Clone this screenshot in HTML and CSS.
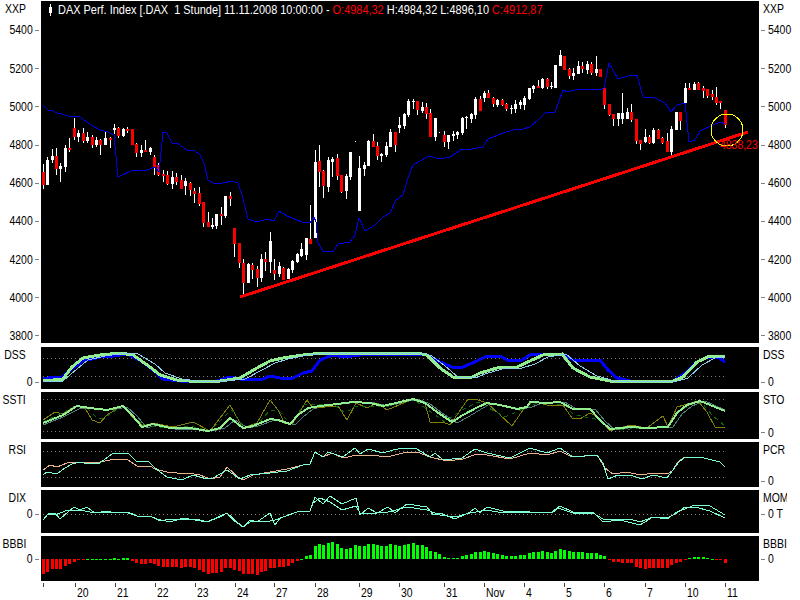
FILE: index.html
```html
<!DOCTYPE html>
<html lang="de">
<head>
<meta charset="utf-8">
<title>DAX Perf. Index</title>
<link rel="stylesheet" href="styles.css">
</head>
<body>
<div class="page">

  <section class="row row-main">
    <div class="gutter gutter-left">
      <div class="scale-name"><span class="t">XXP</span></div>
      <div class="tick"><span class="t">5400</span></div><div class="tick"><span class="t">5200</span></div><div class="tick"><span class="t">5000</span></div>
      <div class="tick"><span class="t">4800</span></div><div class="tick"><span class="t">4600</span></div><div class="tick"><span class="t">4400</span></div>
      <div class="tick"><span class="t">4200</span></div><div class="tick"><span class="t">4000</span></div><div class="tick"><span class="t">3800</span></div>
    </div>
    <div class="plot">
      <div class="legend">
        <svg class="legend-icon" viewBox="0 0 6 12"><path class="wick" d="M3 0V12"/><path class="body-w" d="M3 3V9" /></svg>
        <span class="legend-text">DAX Perf. Index [.DAX  1 Stunde] 11.11.2008 10:00:00 - <span class="down">O:4984,32</span> H:4984,32 L:4896,10 <span class="down">C:4912,87</span></span>
      </div>
      <svg class="chart" viewBox="41 1 718 342" width="718" height="342">
        <path class="wick" d="M43.5 164V189M47.5 157V185M52.5 149V163M56.5 148V175M60.5 163V182M65.5 145V172M69.5 138V152M74.5 118V140M78.5 130V142M83.5 128V143M87.5 132V143M92.5 135V148M96.5 137V147M100.5 139V155M105.5 132V145M110.5 137V148M114.5 124V134M118.5 127V138M123.5 128V137M127.5 127V133M136.5 143V157M141.5 145V157M145.5 140V152M150.5 147V155M154.5 155V175M158.5 163V176M163.5 170V182M167.5 171V185M172.5 171V189M176.5 173V185M181.5 175V189M185.5 178V195M190.5 182V196M194.5 188V203M199.5 187V206M203.5 202V227M208.5 212V227M212.5 218V229M216.5 214V229M221.5 207V225M225.5 196V218M230.5 192V206M234.5 228V257M239.5 243V268M243.5 259V295M248.5 263V283M252.5 263V279M257.5 266V287M261.5 254V282M265.5 252V271M270.5 232V273M274.5 259V280M279.5 262V277M283.5 267V280M288.5 268V279M292.5 260V273M297.5 253V263M301.5 243V257M306.5 238V260M310.5 205V244M315.5 150V238M319.5 145V187M323.5 170V198M328.5 157V192M332.5 157V177M337.5 154V180M341.5 175V193M346.5 174V199M350.5 152V180M355 141h1M359.5 156V211M364.5 162V176M368.5 140V166M373.5 134V147M377.5 142V160M381.5 153V162M386.5 142V157M390.5 129V147M395.5 132V152M399.5 117V133M404.5 113V129M408.5 99V117M413.5 99V109M417.5 101V115M422.5 102V113M426.5 103V119M430.5 109V137M435.5 118V141M439 132h1M444.5 131V147M448.5 135V149M453.5 131V141M457.5 131V139M462.5 117V135M466.5 116V129M471.5 113V123M475.5 97V119M480.5 96V111M484.5 91V102M488.5 90V98M493.5 97V107M497.5 99V107M502.5 99V106M506.5 103V111M511.5 105V114M515.5 100V113M520.5 100V109M524.5 96V110M529.5 88V100M533.5 85V93M538.5 80V88M542.5 78V89M547.5 78V89M551.5 82V89M560.5 50V66M569.5 68V79M573.5 68V80M578.5 61V74M582.5 62V73M587.5 61V74M591.5 62V75M596.5 56V76M604.5 87V109M609.5 104V116M613.5 114V126M618.5 113V126M622.5 93V124M627.5 108V119M631.5 104V122M636.5 119V144M640.5 140V150M645.5 129V143M649.5 135V144M653.5 128V144M658.5 129V139M662.5 137V144M667.5 133V152M671.5 126V155M680.5 112V130M685.5 83V103M689.5 83V90M694.5 82V90M698.5 82V90M703.5 86V98M707.5 89V98M712.5 90V100M716.5 87V105M720.5 101V109M725.5 110V128"/>
        <path class="body-w" d="M47.5 160V185M52.5 156V160M60.5 166V169M65.5 148V167M78.5 133V137M87.5 137V141M96.5 140V145M105.5 138V145M114.5 128V130M123.5 129V136M141.5 150V153M150.5 148V152M172.5 177V184M185.5 181V186M212.5 225V227M216.5 214V226M225.5 196V216M248.5 264V283M261.5 259V278M270.5 241V262M279.5 266V274M288.5 269V279M292.5 261V270M297.5 254V262M301.5 249V256M306.5 238V255M315.5 162V238M328.5 160V187M332.5 159V162M346.5 176V191M350.5 152V177M359.5 168V211M364.5 165V169M368.5 141V166M381.5 154V156M386.5 146V155M390.5 132V147M399.5 125V128M404.5 114V126M408.5 101V115M413.5 101V102M422.5 107V111M435.5 118V137M448.5 135V142M453.5 134V136M457.5 132V135M462.5 118V133M466.5 117V118M471.5 114V119M475.5 99V115M484.5 93V98M497.5 100V105M511.5 108V109M515.5 104V109M520.5 102V105M524.5 98V105M529.5 88V99M533.5 86V89M542.5 79V88M551.5 86V87M555.5 65V88M560.5 55V66M573.5 73V76M578.5 66V74M587.5 64V70M596.5 69V73M618.5 113V119M622.5 113V119M627.5 112V119M645.5 137V142M653.5 130V143M671.5 129V152M676.5 112V130M685.5 88V103M694.5 84V90"/>
        <path class="body-r" d="M43.5 172V185M56.5 156V169M69.5 148V150M74.5 128V137M83.5 133V141M92.5 137V145M100.5 140V145M110.5 138V140M118.5 128V136M127.5 129V131M132.5 129V145M136.5 144V153M145.5 150V152M154.5 157V167M158.5 165V175M163.5 174V176M167.5 175V184M176.5 177V182M181.5 180V189M190.5 183V190M194.5 191V194M199.5 193V204M203.5 202V223M208.5 222V227M221.5 214V216M230.5 196V199M234.5 228V244M239.5 243V263M243.5 263V283M252.5 265V270M257.5 269V278M265.5 259V262M274.5 270V274M283.5 268V280M310.5 239V244M319.5 161V172M323.5 171V186M337.5 158V176M341.5 175V192M373.5 141V147M377.5 146V156M395.5 132V145M417.5 101V110M426.5 107V114M430.5 113V137M444.5 135V142M480.5 99V111M488.5 93V98M493.5 98V104M502.5 100V105M506.5 104V109M538.5 86V88M547.5 79V87M564.5 56V70M569.5 69V76M582.5 66V69M591.5 64V73M600.5 69V77M604.5 88V105M609.5 104V115M613.5 114V119M631.5 112V120M636.5 119V141M640.5 140V144M649.5 137V143M658.5 130V139M662.5 138V143M667.5 141V152M680.5 112V121M689.5 88V90M698.5 83V90M703.5 88V91M707.5 89V96M712.5 94V97M716.5 97V103M720.5 101V103M725.5 110V125"/>
        <polyline class="line-blue" points="43,105 48,110 53,111 57,113 62,114 68,116 74,117 78,116 83,119 91,125 100,130 108,132 114,135 118,177 133,170 147,170 155,167 159,172 163,132 167,133 172,143 177,143 187,150 195,151 200,155 204,163 208,180 215,184 223,183 232,181 238,183 242,195 248,219 257,222 267,219 274,221 279,211 287,216 302,222 310,223 314,217 316,222 318,243 323,251 333,252 338,244 350,242 355,235 359,218 365,231 375,225 383,217 390,213 396,200 403,195 408,178 413,165 420,161 429,156 440,159 450,157 462,149 472,149 483,147 488,139 503,133 513,130 523,129 530,127 538,120 545,113 555,112 563,90 568,92 578,89 602,89 604,88 609,63 613,70 618,79 628,76 637,75 643,97 655,98 665,103 671,112 677,105 685,103 689,142 695,140 700,131 713,125 720,122 725,124"/>
        <line class="trend" x1="240" y1="297" x2="748" y2="132"/>
        <circle class="marker" cx="727" cy="130" r="16"/>
        <text class="value-tag" x="720" y="149">4838,23</text>
      </svg>
    </div>
    <div class="gutter gutter-right">
      <div class="scale-name"><span class="t">XXP</span></div>
      <div class="tick"><span class="t">5400</span></div><div class="tick"><span class="t">5200</span></div><div class="tick"><span class="t">5000</span></div>
      <div class="tick"><span class="t">4800</span></div><div class="tick"><span class="t">4600</span></div><div class="tick"><span class="t">4400</span></div>
      <div class="tick"><span class="t">4200</span></div><div class="tick"><span class="t">4000</span></div><div class="tick"><span class="t">3800</span></div>
    </div>
  </section>

  <section class="row row-dss">
    <div class="gutter gutter-left">
      <div class="name"><span class="t">DSS</span></div>
      <div class="tick-zero"><span class="t">0</span></div>
    </div>
    <div class="plot">
      <svg class="chart" viewBox="41 347 718 42" width="718" height="42">
        <path class="dots" d="M43 358.5H725M43 376.5H725"/>
        <polyline class="thick-blue" points="43,379 53,377 63,377 70,370 83,361 100,357 113,356 127,354 140,360 153,370 163,379 180,381 200,382 217,381 230,377 240,379 263,379 270,376 280,378 293,378 303,373 312,371 320,360 333,355 343,357 360,355 403,354 427,355 440,362 452,367 463,367 477,361 487,356 502,357 507,360 522,360 530,355 543,354 562,354 568,357 573,360 600,360 608,370 617,378 630,381 673,381 687,372 697,362 707,357 718,357 725,362"/>
        <polyline class="thick-green" points="43,381 63,379 72,367 83,358 100,355 120,353 133,355 150,367 160,375 177,380 200,382 220,381 240,378 257,368 270,361 283,358 303,355 323,353 417,353 427,355 440,368 453,377 470,378 480,373 497,368 517,367 530,361 543,355 562,354 573,368 590,377 610,381 630,382 673,381 683,377 697,362 710,356 725,356"/>
        <polyline class="thin-sky" points="43,382 63,381 77,369 88,360 105,356 125,353 138,354 155,364 165,373 182,379 205,382 225,381 245,379 262,370 275,363 288,359 308,355 328,353 422,353 432,356 445,366 458,377 475,378 485,374 502,369 522,368 535,364 548,357 566,354 580,366 597,376 615,381 635,382 678,381 688,378 702,365 715,358 725,357"/>
      </svg>
    </div>
    <div class="gutter gutter-right">
      <div class="name"><span class="t">DSS</span></div>
      <div class="tick-zero"><span class="t">0</span></div>
    </div>
  </section>

  <section class="row row-sto">
    <div class="gutter gutter-left">
      <div class="name"><span class="t">SSTI</span></div>
    </div>
    <div class="plot">
      <svg class="chart" viewBox="41 392 718 47" width="718" height="47">
        <path class="dots" d="M43 399.5H725M43 431.5H725"/>
        <polyline class="thin-slate" points="43,425 63,417 81,408 95,409 112,410 127,407 137,416 147,428 157,425 175,429 195,429 213,431 225,428 235,420 248,428 258,426 275,420 283,421 295,425 303,417 313,409 325,406 342,404 358,402 375,403 388,406 418,399 430,404 442,413 457,423 468,417 483,408 492,403 505,406 522,409 532,407 545,402 552,403 565,402 578,410 595,409 605,421 615,430 635,427 652,428 673,427 682,414 692,406 705,401 725,410"/>
        <polyline class="thin-olive" points="43,420 55,412 63,414 75,406 85,408 92,420 100,423 107,415 123,405 133,418 143,426 153,423 173,427 193,422 210,431 230,405 243,428 257,423 270,400 278,410 285,424 293,423 307,400 313,408 338,406 347,420 356,403 367,408 377,403 387,410 413,399 425,403 430,422 443,422 450,425 468,399 478,400 487,403 512,426 523,410 533,401 547,405 563,405 572,418 580,419 590,413 598,417 610,431 630,425 647,428 663,416 668,427 677,407 698,401 707,412 715,427 725,427"/>
        <polyline class="thin-moss" points="43,422 60,414 76,406 88,409 97,418 104,418 122,406 133,416 145,426 170,428 190,426 210,431 225,416 232,410 243,427 258,424 270,410 280,412 290,424 305,404 335,405 345,413 356,406 385,407 413,399 428,410 445,422 462,410 478,402 505,417 525,408 540,402 565,405 573,414 585,417 600,420 610,430 650,428 668,426 680,410 700,401 712,415 725,426"/>
        <polyline class="thick-green" points="43,423 63,415 77,406 90,408 107,410 123,406 132,415 142,427 153,424 170,428 190,428 208,431 220,428 230,418 243,428 253,426 270,419 278,420 290,424 298,415 308,408 320,406 337,404 353,402 370,403 383,406 413,399 425,403 437,412 452,422 463,415 478,407 487,403 500,405 517,409 527,407 530,402 547,403 560,402 573,409 590,409 600,420 610,429 630,427 647,428 668,427 677,413 687,405 700,401 725,411"/>
      </svg>
    </div>
    <div class="gutter gutter-right">
      <div class="name"><span class="t">STO</span></div>
      <div class="tick-zero"><span class="t">0</span></div>
    </div>
  </section>

  <section class="row row-rsi">
    <div class="gutter gutter-left">
      <div class="name"><span class="t">RSI</span></div>
    </div>
    <div class="plot">
      <svg class="chart" viewBox="41 442 718 45" width="718" height="45">
        <path class="dots" d="M43 451.5H725M43 477.5H725"/>
        <polyline class="line-tan" points="43,470 50,465 57,467 67,463 75,462 90,463 100,462 115,459 128,460 137,466 150,466 155,469 167,472 177,473 187,473 200,475 210,479 220,477 227,467 238,477 243,480 253,475 270,472 287,469 303,465 310,464 315,452 323,457 332,453 343,458 357,455 370,455 387,457 407,452 417,452 430,457 447,461 463,459 477,454 487,455 510,459 530,453 547,455 560,451 572,457 597,455 605,468 613,474 627,472 640,475 655,473 668,474 673,470 677,463 683,458 700,457 720,462 725,467"/>
        <polyline class="line-aqua" points="43,475 47,472 57,474 65,468 72,464 80,462 88,464 100,463 113,453 128,453 137,462 148,461 155,468 167,477 182,480 193,475 207,479 213,478 227,470 240,479 250,475 270,473 287,471 303,465 310,464 315,452 323,457 328,452 343,457 355,448 360,454 368,449 383,453 393,450 403,448 417,449 430,457 435,453 443,460 462,458 475,449 487,453 510,458 530,448 547,453 560,448 573,457 597,455 603,463 608,479 618,475 630,475 642,479 653,475 667,478 673,470 678,463 685,457 700,457 720,462 725,467"/>
      </svg>
    </div>
    <div class="gutter gutter-right">
      <div class="name"><span class="t">PCR</span></div>
      <div class="tick-zero"><span class="t">0</span></div>
    </div>
  </section>

  <section class="row row-mom">
    <div class="gutter gutter-left">
      <div class="name"><span class="t">DIX</span></div>
      <div class="tick-zero"><span class="t">0</span></div>
    </div>
    <div class="plot">
      <svg class="chart" viewBox="41 490 718 43" width="718" height="43">
        <path class="dots" d="M43 514.5H725"/>
        <polyline class="line-aqua" points="43,520 48,514 55,513 60,519 68,512 74,507 80,510 87,507 95,513 107,511 115,513 128,512 137,516 150,516 157,519 170,522 183,518 207,522 220,517 227,513 233,520 243,527 250,520 257,522 270,513 275,525 280,518 297,512 310,511 315,497 323,504 330,496 342,504 356,498 360,515 368,508 377,513 388,507 395,513 407,504 427,507 433,515 440,513 455,519 470,512 475,508 480,513 487,507 503,511 530,512 552,512 560,506 573,512 593,512 603,522 620,520 640,525 653,517 667,519 677,512 695,505 710,506 725,515"/>
        <polyline class="line-aqua" points="43,520 48,514 55,515 68,510 80,510 95,513 107,512 128,513 137,516 150,516 160,521 170,519 197,519 207,522 227,513 237,522 243,527 250,522 270,521 275,520 297,512 310,511 313,503 320,498 330,502 342,510 356,506 360,513 377,513 388,512 407,507 427,510 440,515 455,517 470,513 487,510 503,513 530,512 552,513 558,508 573,513 593,513 603,519 630,519 640,522 653,517 667,518 677,513 685,507 695,507 710,511 725,518"/>
      </svg>
    </div>
    <div class="gutter gutter-right">
      <div class="name name-clipped"><span class="t">MOM</span></div>
      <div class="tick-zero"><span class="t">0 T</span></div>
    </div>
  </section>

  <section class="row row-bbi">
    <div class="gutter gutter-left">
      <div class="name"><span class="t">BBBI</span></div>
      <div class="tick-zero"><span class="t">0</span></div>
    </div>
    <div class="plot">
      <svg class="chart" viewBox="41 536 718 45" width="718" height="45">
        <path class="bar-red" d="M43.5 559v15M47.5 559v13M52.5 559v10M56.5 559v10M60.5 559v10M65.5 559v7M69.5 559v5M74.5 559v3M78.5 559v1M83.5 559v1M132.5 559v2M136.5 559v4M141.5 559v5M145.5 559v5M150.5 559v4M154.5 559v5M158.5 559v7M163.5 559v8M167.5 559v8M172.5 559v8M176.5 559v8M181.5 559v9M185.5 559v8M190.5 559v8M194.5 559v9M199.5 559v11M203.5 559v13M208.5 559v15M212.5 559v14M216.5 559v14M221.5 559v13M225.5 559v9M230.5 559v9M234.5 559v11M239.5 559v12M243.5 559v15M248.5 559v15M252.5 559v15M257.5 559v16M261.5 559v13M265.5 559v12M270.5 559v9M274.5 559v9M279.5 559v8M283.5 559v8M288.5 559v7M292.5 559v4M297.5 559v2M609.5 559v1M613.5 559v3M618.5 559v3M622.5 559v4M627.5 559v4M631.5 559v4M636.5 559v8M640.5 559v9M645.5 559v10M649.5 559v9M653.5 559v9M658.5 559v9M662.5 559v9M667.5 559v9M671.5 559v6M676.5 559v4M680.5 559v3M685.5 559v1M716.5 559v1M720.5 559v1M725.5 559v4"/>
        <path class="bar-green" d="M87.5 560v-1M92.5 560v-1M96.5 560v-1M100.5 560v-1M105.5 560v-1M110.5 560v-1M114.5 560v-2M118.5 560v-1M123.5 560v-2M127.5 560v-2M301.5 560v-1M306.5 559v-3M310.5 559v-4M315.5 559v-13M319.5 559v-15M323.5 559v-14M328.5 559v-16M332.5 559v-17M337.5 559v-15M341.5 559v-11M346.5 559v-10M350.5 559v-11M355.5 559v-14M359.5 559v-13M364.5 559v-13M368.5 559v-15M373.5 559v-15M377.5 559v-14M381.5 559v-13M386.5 559v-13M390.5 559v-15M395.5 559v-14M399.5 559v-13M404.5 559v-14M408.5 559v-15M413.5 559v-16M417.5 559v-14M422.5 559v-14M426.5 559v-12M430.5 559v-8M435.5 559v-7M439.5 559v-5M444.5 559v-2M448.5 559v-1M453.5 559v-1M457.5 559v-1M462.5 559v-3M466.5 559v-4M471.5 559v-5M475.5 559v-7M480.5 559v-7M484.5 559v-8M488.5 559v-7M493.5 559v-6M497.5 559v-5M502.5 559v-4M506.5 559v-3M511.5 559v-3M515.5 559v-3M520.5 559v-4M524.5 559v-4M529.5 559v-6M533.5 559v-7M538.5 559v-7M542.5 559v-8M547.5 559v-7M551.5 559v-6M555.5 559v-8M560.5 559v-10M564.5 559v-9M569.5 559v-8M573.5 559v-7M578.5 559v-7M582.5 559v-7M587.5 559v-6M591.5 559v-6M596.5 559v-6M600.5 559v-4M604.5 559v-3M689.5 559v-1M694.5 559v-2M698.5 559v-2M703.5 559v-2M707.5 559v-1M712.5 560v-1"/>
      </svg>
    </div>
    <div class="gutter gutter-right">
      <div class="name"><span class="t">BBBI</span></div>
      <div class="tick-zero"><span class="t">0</span></div>
    </div>
  </section>

  <svg class="time-axis" viewBox="0 581 800 19" width="800" height="19">
    <path class="axis-ticks" d="M43.5 583v4M75.5 583v4M115.5 583v4M155.5 583v4M195.5 583v4M235.5 583v4M274.5 583v4M315.5 583v4M359.5 583v4M399.5 583v4M444.5 583v4M484.5 583v4M524.5 583v4M564.5 583v4M604.5 583v4M645.5 583v4M685.5 583v4M725.5 583v4"/>
    <text x="77" y="597">20</text><text x="117" y="597">21</text><text x="157" y="597">22</text>
    <text x="197" y="597">23</text><text x="237" y="597">24</text><text x="276" y="597">27</text>
    <text x="317" y="597">28</text><text x="361" y="597">29</text><text x="401" y="597">30</text>
    <text x="446" y="597">31</text><text x="486" y="597">Nov</text><text x="526" y="597">4</text>
    <text x="566" y="597">5</text><text x="606" y="597">6</text><text x="647" y="597">7</text>
    <text x="687" y="597">10</text><text x="727" y="597">11</text>
  </svg>
</div>
</body>
</html>
```
FILE: styles.css
```css
html, body {
  margin: 0;
  padding: 0;
  background: #fff;
}

body {
  font-family: "Liberation Sans", Arial, sans-serif;
  font-size: 12px;
  line-height: 14px;
  color: #000;
}

.page {
  width: 800px;
  height: 600px;
  padding-top: 1px;
  box-sizing: border-box;
  overflow: hidden;
}

.row {
  display: flex;
  margin-top: 3px;
}

.row-main { margin-top: 0; height: 342px; margin-bottom: 4px; }
.row-dss { margin-top: 0; height: 42px; }
.row-sto { height: 47px; }
.row-rsi { height: 45px; }
.row-mom { height: 43px; }
.row-bbi { height: 45px; }

.plot {
  position: relative;
  width: 718px;
  flex: none;
  background: #000;
  overflow: hidden;
}

.chart { display: block; }

.gutter {
  width: 41px;
  flex: none;
  display: flex;
  flex-direction: column;
  padding-top: 1px;
  box-sizing: border-box;
}

.row-main .gutter { padding-top: 0; }

.gutter-left { align-items: flex-end; padding-right: 2px; }
.gutter-right { align-items: flex-start; padding-left: 2px; }

/* The labels are a tall, condensed face: Liberation Sans narrowed to fit. */
.t {
  display: inline-block;
  white-space: pre;
  transform: scaleX(0.87);
}
.gutter-left .t { transform-origin: right center; }
.gutter-right .t { transform-origin: left center; }

.name { padding-right: 13px; white-space: nowrap; }
.gutter-right .name { padding: 0 0 0 2px; }

.name-clipped {
  width: 26px;
  overflow: hidden;
  box-sizing: border-box;
}

.scale-name {
  height: 10.4px;
  flex: none;
  line-height: 16px;
  padding-right: 13px;
}
.gutter-right .scale-name { padding: 0 0 0 2px; }

.tick,
.tick-zero {
  display: flex;
  align-items: center;
  gap: 2px;
  flex: none;
}

.tick { height: 38.2px; }

.gutter-left .tick::after,
.gutter-left .tick-zero::after,
.gutter-right .tick::before,
.gutter-right .tick-zero::before {
  content: "";
  width: 4px;
  height: 1px;
  background: #808080;
  flex: none;
}

.gutter-right .tick,
.gutter-right .tick-zero { gap: 3px; }

.row-dss .tick-zero { margin-top: 13px; }
.row-sto .tick-zero { margin-top: 18.5px; }
.row-rsi .tick-zero { margin-top: 17px; }
.row-mom .tick-zero { margin-top: 2px; }
.row-bbi .tick-zero { margin-top: 1px; }

.legend {
  position: absolute;
  left: 6px;
  top: 2px;
  display: flex;
  align-items: center;
  color: #fff;
}

.legend-icon {
  width: 6px;
  height: 12px;
  margin-right: 5px;
  flex: none;
}

.legend-text {
  display: inline-block;
  white-space: pre;
  transform: scaleX(0.912);
  transform-origin: left center;
}

.legend .down { color: #f00; }

.chart path,
.chart polyline,
.chart line,
.chart circle,
.time-axis path,
.legend-icon path {
  fill: none;
  shape-rendering: crispEdges;
}

.wick { stroke: #fff; stroke-width: 1; }
.body-w { stroke: #fff; stroke-width: 3; }
.body-r { stroke: #f00; stroke-width: 3; }
.line-blue { stroke: #0000e0; stroke-width: 1; }
.trend { stroke: #f00; stroke-width: 3; }
.marker { stroke: #ff0; stroke-width: 1; }

.value-tag,
.time-axis text {
  font-family: "Liberation Sans", Arial, sans-serif;
  font-size: 12px;
  transform: scaleX(0.87);
  transform-box: fill-box;
  transform-origin: left center;
}

.value-tag { fill: #f00; }
.time-axis text { fill: #000; }

.dots { stroke: #808080; stroke-width: 1; stroke-dasharray: 1 3; }
.thick-blue { stroke: #0000ff; stroke-width: 3; }
.thick-green { stroke: #90ee90; stroke-width: 3; }
.row-sto .thick-green { stroke-width: 2; }
.thin-sky { stroke: #87ceeb; stroke-width: 1; }
.thin-slate { stroke: #4f7f78; stroke-width: 1; }
.thin-olive { stroke: #808000; stroke-width: 1; }
.thin-moss { stroke: #0b6b0b; stroke-width: 1; stroke-dasharray: 4 4; }
.line-tan { stroke: #e8b48c; stroke-width: 1; }
.line-aqua { stroke: #7fffd4; stroke-width: 1; }
.bar-red { stroke: #f00; stroke-width: 3; }
.bar-green { stroke: #0f0; stroke-width: 3; }

.time-axis { display: block; }
.axis-ticks { stroke: #404040; stroke-width: 1; }
```
